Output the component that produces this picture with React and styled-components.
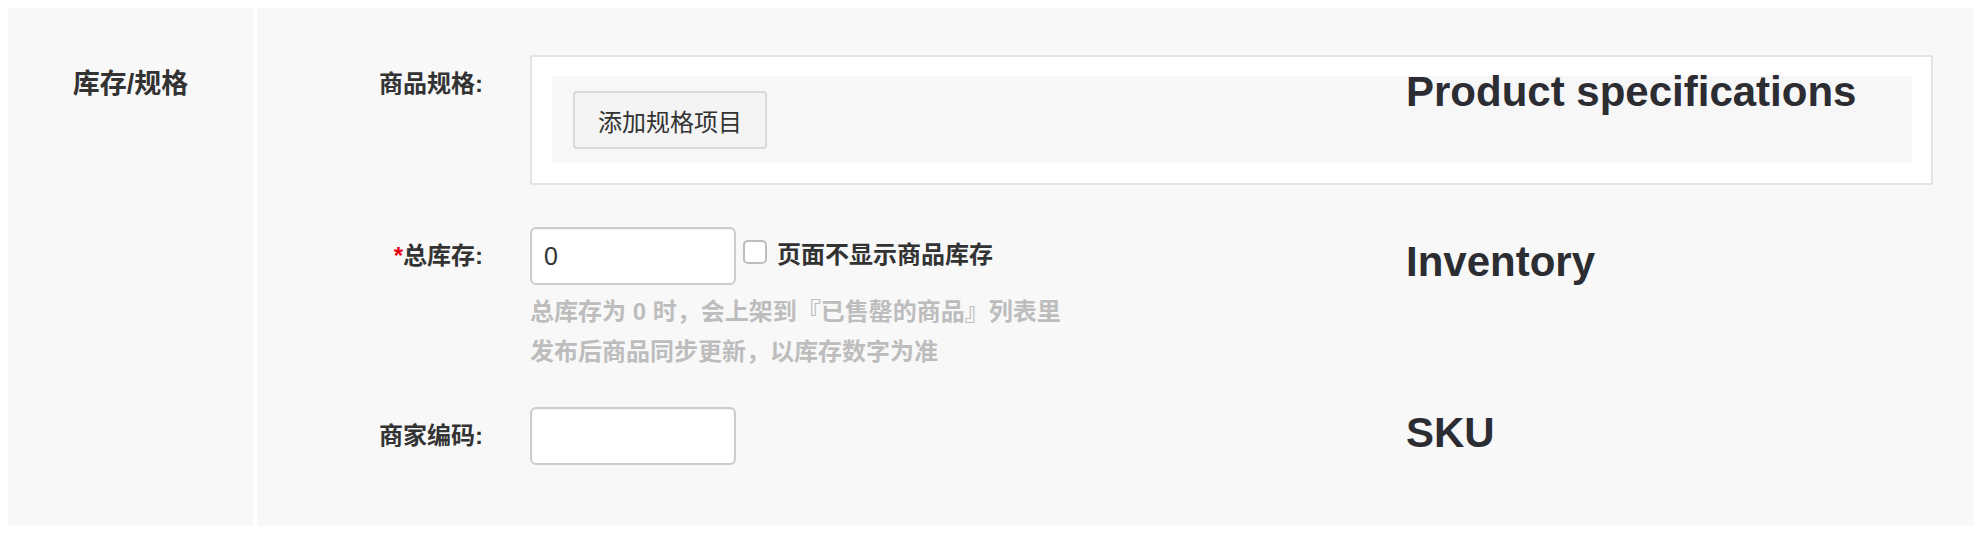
import styled, { createGlobalStyle } from 'styled-components';

const GlobalStyle = createGlobalStyle`
  body {
    margin: 0;
    background: #fff;
    font-family: "Liberation Sans", "Noto Sans CJK SC", sans-serif;
    color: #333;
  }
`;

const Page = styled.div`
  padding: 8px 12px 8px 8px;
`;

const Panel = styled.div`
  display: grid;
  grid-template-columns: 245px 1fr;
  column-gap: 4px;
  height: 518px;
`;

const Side = styled.div`
  background: #f8f8f8;
  padding-top: 47px;
  text-align: center;
  font-size: 27px;
  font-weight: bold;
  line-height: 58px;
  color: #333;
`;

const Main = styled.div`
  background: #f8f8f8;
  padding: 47px 41px 0 0;
`;

const Row = styled.div`
  position: relative;
  display: flex;
  align-items: flex-start;
  margin-top: ${props => props.$gap || 0}px;
`;

const Label = styled.div`
  width: 226px;
  margin-right: 47px;
  flex-shrink: 0;
  text-align: right;
  font-size: 24px;
  font-weight: bold;
  line-height: 58px;
  color: #333;

  em {
    font-style: normal;
    color: #e60012;
  }
`;

const Field = styled.div`
  flex: 1;
`;

const SpecBox = styled.div`
  border: 2px solid #e4e4e4;
  background: #fff;
  padding: 19px 19px 20px 20px;
`;

const SpecInner = styled.div`
  background: #f7f7f7;
  padding: 15px 21px 14px;
`;

const Button = styled.button`
  width: 194px;
  height: 58px;
  border: 2px solid #d9d9d9;
  border-radius: 4px;
  background: #f4f4f4;
  font-family: inherit;
  font-size: 24px;
  color: #333;
  padding: 0;
`;

const InputLine = styled.div`
  display: flex;
  align-items: flex-start;
`;

const TextInput = styled.input`
  box-sizing: border-box;
  width: 206px;
  height: 58px;
  border: 2px solid #cccccc;
  border-radius: 6px;
  background: #fff;
  padding: 0 12px;
  font-family: inherit;
  font-size: 25px;
  color: #333;
  outline: none;
  box-shadow: inset 0 1px 2px rgba(0, 0, 0, 0.05);
`;

const Check = styled.label`
  display: flex;
  align-items: center;
  height: 50px;
  margin-left: 7px;
  font-size: 24px;
  font-weight: bold;
  color: #333;
`;

const Box = styled.span`
  box-sizing: border-box;
  width: 24px;
  height: 24px;
  border: 2px solid #bdbdbd;
  border-radius: 5px;
  background: #fff;
  margin-right: 10px;
`;

const Help = styled.div`
  margin-top: 7px;
  font-size: 24px;
  font-weight: bold;
  line-height: 40px;
  color: #bdbdbd;
`;

const Note = styled.div`
  position: absolute;
  left: 1149px;
  top: ${props => props.$top}px;
  font-family: "Liberation Sans", Arial, sans-serif;
  font-size: 42px;
  font-weight: bold;
  line-height: 1;
  color: #2c2c33;
  white-space: nowrap;
`;

export default function App() {
  return (
    <>
      <GlobalStyle />
      <Page>
        <Panel>
          <Side>库存/规格</Side>
          <Main>
            <Row>
              <Label>商品规格:</Label>
              <Field>
                <SpecBox>
                  <SpecInner>
                    <Button>添加规格项目</Button>
                  </SpecInner>
                </SpecBox>
              </Field>
              <Note $top={16}>Product specifications</Note>
            </Row>

            <Row $gap={42}>
              <Label><em>*</em>总库存:</Label>
              <Field>
                <InputLine>
                  <TextInput defaultValue="0" />
                  <Check>
                    <Box />
                    页面不显示商品库存
                  </Check>
                </InputLine>
                <Help>
                  <div>总库存为 0 时，会上架到『已售罄的商品』列表里</div>
                  <div>发布后商品同步更新，以库存数字为准</div>
                </Help>
              </Field>
              <Note $top={14}>Inventory</Note>
            </Row>

            <Row $gap={35}>
              <Label>商家编码:</Label>
              <Field>
                <TextInput />
              </Field>
              <Note $top={5}>SKU</Note>
            </Row>
          </Main>
        </Panel>
      </Page>
    </>
  );
}
